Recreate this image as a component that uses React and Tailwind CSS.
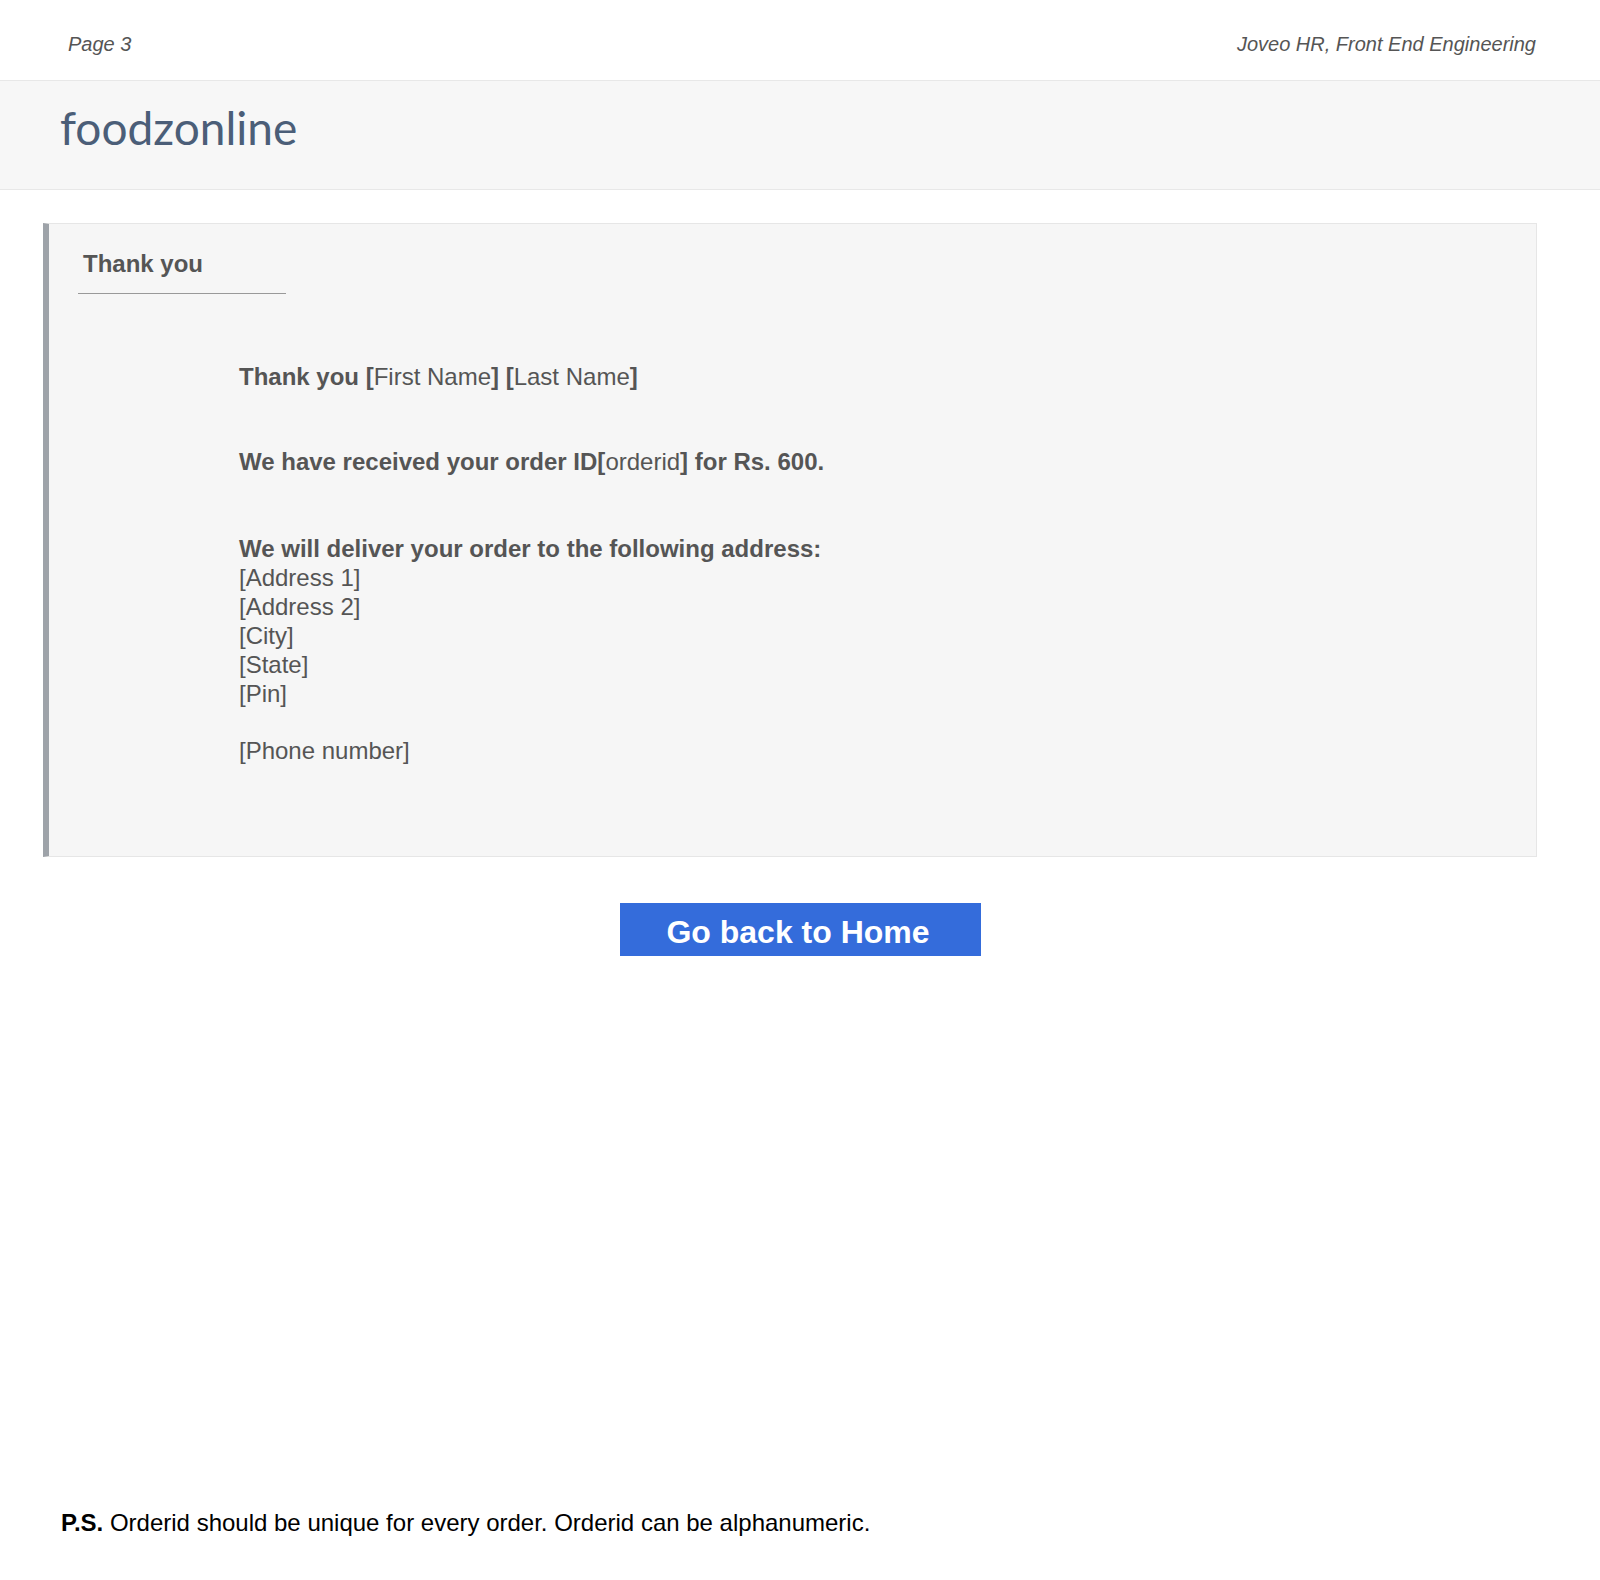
export default function App() {
    const lines = ["[Address 1]", "[Address 2]", "[City]", "[State]", "[Pin]"];

    return (
        <div className="min-h-[1580px] bg-white font-['Liberation_Sans',Arial,sans-serif] flex flex-col">
            {/* Page header */}
            <div className="h-[81px] border-b border-[#e8e8e8] flex justify-between items-start pt-[33px] pl-[68px] pr-[64px] italic text-[20px] leading-[23px] text-[#555]">
                <span>Page 3</span>
                <span>Joveo HR, Front End Engineering</span>
            </div>

            {/* Brand band */}
            <div className="h-[109px] bg-[#f7f7f7] border-b border-[#e8e8e8] pl-[60px] pt-[18px]">
                <span className="font-['Lato',sans-serif] text-[46px] leading-[58px] text-[#4b5e78]">
                    foodzonline
                </span>
            </div>

            {/* Thank you card */}
            <div className="mt-[33px] ml-[43px] mr-[63px] bg-[#f6f6f6] border border-[#e6e6e6] border-l-[6px] border-l-[#9ea3a9] pt-[26px] pb-[91px] pl-[29px]">
                <div className="w-[208px] border-b border-[#999] pl-[5px] pb-[15px]">
                    <h2 className="text-[24px] leading-[28px] font-bold text-[#555]">
                        Thank you
                    </h2>
                </div>

                <div className="pl-[161px] text-[24px] leading-[29px] text-[#555]">
                    <p className="mt-[68px]">
                        <b>Thank you [</b>First Name<b>] [</b>Last Name
                        <b>]</b>
                    </p>
                    <p className="mt-[56px] font-bold">
                        We have received your order ID[
                        <span className="font-normal">orderid</span>] for Rs.
                        600.
                    </p>
                    <p className="mt-[58px] font-bold">
                        We will deliver your order to the following address:
                    </p>
                    {lines.map((l) => (
                        <p key={l}>{l}</p>
                    ))}
                    <p className="mt-[28px]">[Phone number]</p>
                </div>
            </div>

            {/* Action */}
            <div className="mt-[46px] flex justify-center">
                <button className="w-[361px] h-[53px] bg-[#346cdb] text-white font-bold text-[32px] leading-none pt-[4px] pr-[4px]">
                    Go back to Home
                </button>
            </div>

            <p className="mt-[553px] pl-[61px] text-[24px] leading-[28px] text-black">
                <b>P.S.</b> Orderid should be unique for every order. Orderid
                can be alphanumeric.
            </p>
        </div>
    );
}
